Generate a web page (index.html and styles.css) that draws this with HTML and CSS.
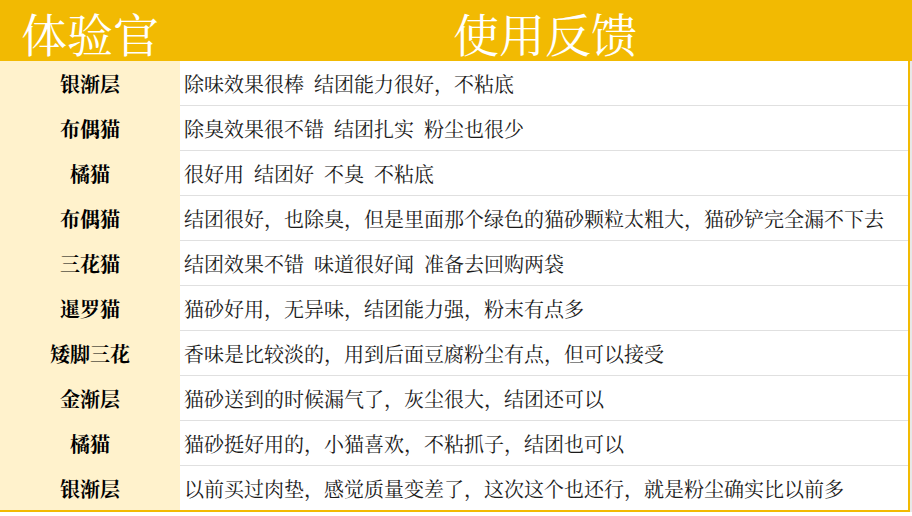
FILE: index.html
```html
<!DOCTYPE html>
<html lang="zh-CN">
<head>
<meta charset="utf-8">
<title>体验官 使用反馈</title>
<link rel="stylesheet" href="styles.css">
</head>
<body>
<div class="sheet">
  <div class="header">
    <div class="h-name">体验官</div>
    <div class="h-feedback">使用反馈</div>
  </div>
  <div class="rows">
    <div class="row"><div class="name">银渐层</div><div class="text">除味效果很棒&ensp;结团能力很好，不粘底</div></div>
    <div class="row"><div class="name">布偶猫</div><div class="text">除臭效果很不错&ensp;结团扎实&ensp;粉尘也很少</div></div>
    <div class="row"><div class="name">橘猫</div><div class="text">很好用&ensp;结团好&ensp;不臭&ensp;不粘底</div></div>
    <div class="row"><div class="name">布偶猫</div><div class="text">结团很好，也除臭，但是里面那个绿色的猫砂颗粒太粗大，猫砂铲完全漏不下去</div></div>
    <div class="row"><div class="name">三花猫</div><div class="text">结团效果不错&ensp;味道很好闻&ensp;准备去回购两袋</div></div>
    <div class="row"><div class="name">暹罗猫</div><div class="text">猫砂好用，无异味，结团能力强，粉末有点多</div></div>
    <div class="row"><div class="name">矮脚三花</div><div class="text">香味是比较淡的，用到后面豆腐粉尘有点，但可以接受</div></div>
    <div class="row"><div class="name">金渐层</div><div class="text">猫砂送到的时候漏气了，灰尘很大，结团还可以</div></div>
    <div class="row"><div class="name">橘猫</div><div class="text">猫砂挺好用的，小猫喜欢，不粘抓子，结团也可以</div></div>
    <div class="row last"><div class="name">银渐层</div><div class="text">以前买过肉垫，感觉质量变差了，这次这个也还行，就是粉尘确实比以前多</div></div>
  </div>
</div>
</body>
</html>
```
FILE: styles.css
```css
* { box-sizing: border-box; }
html, body {
  margin: 0;
  padding: 0;
  background: #ffffff;
}
body {
  width: 912px;
  height: 516px;
  overflow: hidden;
  font-family: "Noto Serif CJK SC", "Noto Sans CJK SC", "Liberation Serif", serif;
}
.sheet {
  width: 912px;
}
.header {
  display: flex;
  height: 61px;
  background: #f2ba02;
  color: #ffffff;
  font-size: 46px;
  line-height: 1;
  font-weight: 400;
}
.h-name {
  width: 180px;
  display: flex;
  align-items: center;
  justify-content: center;
  padding-top: 2px;
}
.h-feedback {
  flex: 1;
  display: flex;
  align-items: center;
  justify-content: center;
  padding-top: 2px;
  padding-right: 2px;
}
.rows {
  width: 910px;
  border-right: 2px solid #f2ba02;
  border-bottom: 2px solid #f2ba02;
  box-shadow: 2px 0 0 #e8e8e8;
}
.row {
  display: flex;
  height: 45px;
}
.row.last {
  height: 44px;
}
.name {
  width: 180px;
  background: #fff2cc;
  display: flex;
  align-items: center;
  justify-content: center;
  font-size: 20px;
  font-weight: 700;
  color: #000000;
}
.text {
  flex: 1;
  display: flex;
  align-items: center;
  padding-left: 4px;
  font-size: 20px;
  color: #1a1a1a;
  white-space: nowrap;
  border-bottom: 1px solid #e0e0e0;
}
.row.last .text {
  border-bottom: none;
}
```
